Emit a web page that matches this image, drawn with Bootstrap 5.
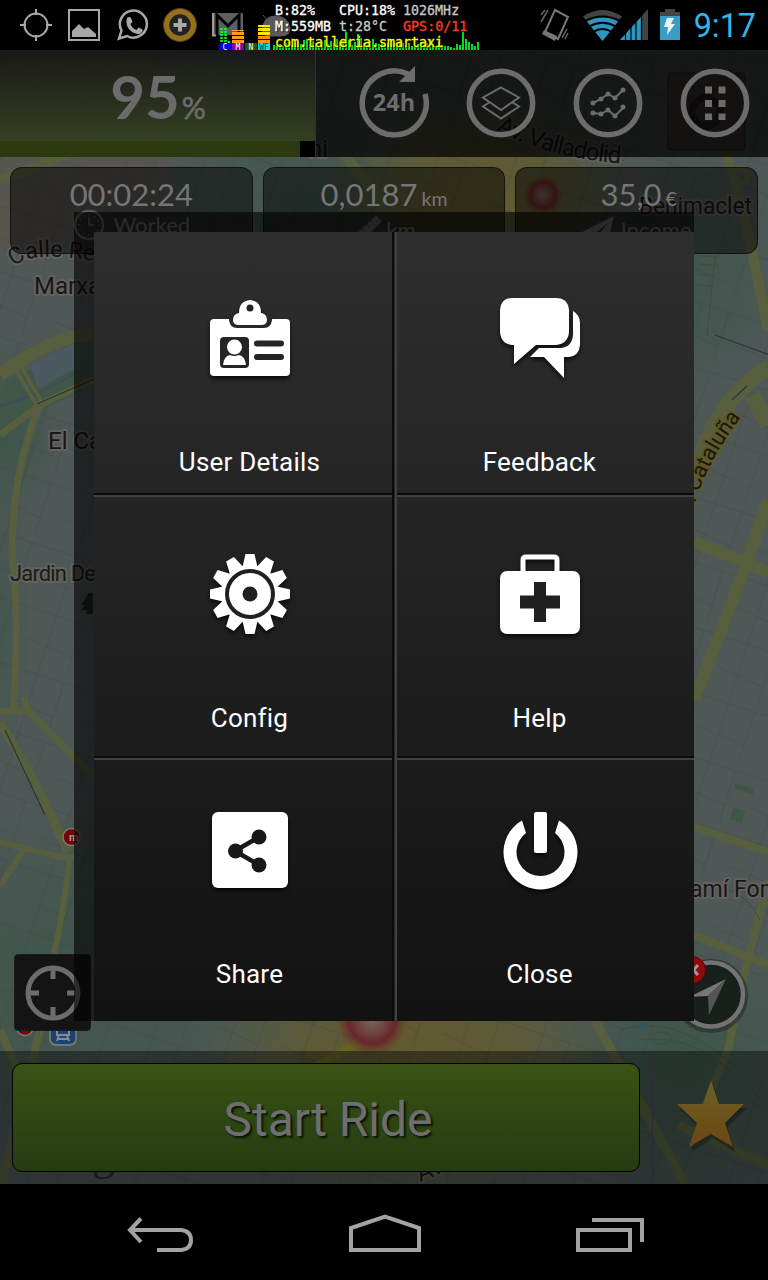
<!DOCTYPE html>
<html lang="en">
<head>
    <meta charset="UTF-8">
    <meta name="viewport" content="width=device-width, initial-scale=1.0">
    <title>Smartaxi</title>
    <link href="https://cdn.jsdelivr.net/npm/bootstrap@5.3.0/dist/css/bootstrap.min.css" rel="stylesheet">
    <style>
        body {
            background: #000;
            font-family: Roboto, sans-serif;
        }
        .phone {
            width: 768px;
            height: 1280px;
            overflow: hidden;
            background: #000;
        }
        svg {
            display: block;
            flex: none;
        }
        /* status bar */
        .status-bar {
            height: 50px;
            padding: 0 12px 0 18px;
        }
        .clock {
            font-size: 32.3px;
            line-height: 50px;
            color: #33b5e5;
            margin-left: 13px;
            padding-top: 2px;
        }
        .monitor {
            left: 219px;
            top: 0;
            width: 264px;
            height: 51px;
        }
        .monitor-text {
            left: 56px;
            top: 3px;
            font: 13.3px/16px "DejaVu Sans Mono", monospace;
            color: #fff;
            white-space: pre;
            -webkit-text-stroke: .3px;
            text-shadow: 1px 1px 1px #000;
        }
        .t-dim { color: #c8c8c8; }
        .t-red { color: #ff3b1d; }
        .t-yellow { color: #ff0; }
        /* map screen */
        .screen {
            height: 1134px;
        }
        .map {
            left: 0;
            top: 0;
        }
        .top-bar {
            height: 107px;
            background: rgba(0, 0, 0, .73);
        }
        .battery-cell {
            width: 316px;
            border-right: 1px solid #303232;
            background: linear-gradient(rgba(34, 34, 34, .2), rgba(66, 80, 38, .82));
        }
        .battery-value {
            height: 91px;
            font-family: Lato, sans-serif;
            font-weight: 700;
            font-size: 60px;
            line-height: 92px;
            color: #6b6b6b;
            padding-left: 1px;
        }
        .battery-value span {
            font-size: 30px;
            font-weight: 400;
            margin-left: 2px;
            -webkit-text-stroke: .6px;
        }
        .level {
            height: 16px;
            background: #000;
            border-radius: 0;
        }
        .level .progress-bar {
            background: #2d3a10;
        }
        .tools {
            padding-bottom: 1px;
        }
        .tool {
            width: 107px;
        }
        .stat {
            height: 87px;
            border: 1px solid rgba(0, 0, 0, .55);
            border-radius: 12px;
            background: rgba(0, 0, 0, .5);
            font-family: Lato, sans-serif;
            color: #757575;
            padding-top: 7px;
        }
        .stat-value {
            font-size: 31px;
            line-height: 38px;
        }
        .stat-value small {
            font-size: 19.5px;
            margin-left: 4px;
        }
        .stat-name {
            height: 24px;
            font-size: 22px;
            line-height: 24px;
            gap: 9px;
            color: #6a6a6a;
        }
        .locate {
            width: 77px;
            height: 77px;
            background: #141414;
            border: 1px solid #1c1c1c;
            border-radius: 4px;
        }
        .compass {
            left: 667px;
            top: 897px;
        }
        .bottom-bar {
            height: 133px;
            background: rgba(0, 0, 0, .4);
        }
        .ride-wrap {
            width: 653px;
            padding: 12px;
            border-right: 1px solid #2e2a35;
        }
        .btn-ride, .btn-ride:hover {
            height: 109px;
            border: 1px solid #000;
            border-radius: 10px;
            background: linear-gradient(#395214, #243c12);
            color: #6e6e6e;
            font-size: 48px;
            text-shadow: 2px 2px 2px #0b1405;
        }
        .soft-keys {
            height: 96px;
            padding: 2px 0 0 127px;
            gap: 155.5px;
        }
        /* popup menu */
        .popup {
            left: 74px;
            top: 212px;
            padding: 20px 0 0 20px;
            background: rgba(0, 0, 0, .6);
        }
        .menu {
            width: 600px;
            height: 789px;
            display: grid;
            grid-template: 261px 263px 265px / 303px 297px;
            background: linear-gradient(#2e2e2e, #121212);
        }
        .menu-item {
            color: #fff;
            font-size: 26px;
            line-height: 32px;
            letter-spacing: .2px;
            padding: 66px 12px 0 0;
        }
        .menu-item svg {
            filter: drop-shadow(0 3px 2px rgba(0, 0, 0, .7));
            margin-bottom: 66px;
        }
        .menu-item:nth-child(odd) {
            padding-left: 10px;
            padding-right: 0;
            border-right: 2px solid #414141;
            box-shadow: inset -1px 0 #262626, inset -3px 0 #0b0b0b;
        }
        .row-2, .row-3 {
            background: linear-gradient(#0b0b0b 2px, #404040 2px, #404040 4px, transparent 4px) no-repeat;
        }
        .menu-item.row-2 { padding-top: 61px; }
        .menu-item.row-3 { padding-top: 54px; }
    </style>
</head>
<body>
<div class="phone position-relative d-flex flex-column">

    <!-- status bar -->
    <div class="status-bar d-flex align-items-center position-relative">
        <svg width="250" height="50" viewBox="18 0 250 50" fill="none">
            <g stroke="#a8a8a8" stroke-width="2"><circle cx="36" cy="25" r="11.5"/><path d="M36 9v6M36 35v6M20 25h6M46 25h6"/><path d="M69 10h30v30H69z"/></g>
            <path d="M72 37v-6l7-7 5 5 4-2 8 7v3z" fill="#a8a8a8"/>
            <path d="M119 38.500l2.500-8a13.500 13.500 0 1 1 5.500 5.500z" stroke="#a8a8a8" stroke-width="2.500"/>
            <path d="M127 18c2-2 4-1 4.500 1l1 3-2 2c1 3 3 5 6 6l2-2.500 4 2c1 1-1 5-5 4.500-7-1-13-8-10.500-16z" fill="#a8a8a8"/>
            <circle cx="180" cy="25" r="13.500" stroke="#95701f" stroke-width="5.500" fill="#222"/>
            <circle cx="180" cy="25" r="16.500" stroke="#5b4518"/>
            <path d="M180 18.500v13M173.500 25h13" stroke="#a8a8a8" stroke-width="4"/>
            <path d="M213 13h30v22h-30z" fill="#5f5f5f"/><path d="M217 36V15l11 11 11-11v21" stroke="#000" stroke-width="3"/><path d="M216 35.500h-3V13" stroke="#9a9a9a" stroke-width="2"/>
        </svg>
        <div class="ms-auto d-flex align-items-center">
            <svg width="147" height="50" viewBox="534 0 147 50" fill="none">
                <path d="M555 10l13 7-10 22-13-7z" stroke="#777" stroke-width="2"/><path d="M544 30l13 6-2 5-13-7z" fill="#777"/>
                <path d="M541 15l4-5M541 22l7-12M562 38l5-9M565 39l3-6" stroke="#666" stroke-width="1.500"/>
                <path d="M602.500 41L583 16.500q19.500-13 39 0z" fill="#444"/>
                <path d="M602.500 41L587 21.500q15.500-8.500 31 0z" fill="#2b96bf"/>
                <g stroke="#000" stroke-width="2"><path d="M585 21q17.500-9 35 0"/><path d="M589 26.500q13.500-7.500 27 0"/><path d="M593 32q9.500-6 19 0"/></g>
                <path d="M620 40l28-31v31z" fill="#444"/><path d="M620 40l21-23v23z" fill="#2b96bf"/><path d="M625.500 20v20M631 20v20M636 16v24M641.500 10v30" stroke="#000" stroke-width="1.200"/>
                <path d="M665 9h10v3h5v5h-20v-5h5z" fill="#444"/><path d="M660 16h20v24h-20z" fill="#3a9cc4"/><path d="M667 18h7l-3 6h4l-8 11 1-8h-4z" fill="#e8f2f6"/>
            </svg>
            <div class="clock">9:17</div>
        </div>

        <!-- system monitor drawn over the status icons -->
        <div class="monitor position-absolute">
            <svg width="264" height="51" viewBox="219 0 264 51" id="monitorGraph">
                <path d="M262 34q0-18 13-18t15 12q0 8-9 8h-13zM263 15l4 5" fill="#5a5a5a" stroke="#5a5a5a"/>
                <path d="M221.500 28v15M225.500 28v15M229 41v2" stroke="#00ff2a" stroke-width="2.500" stroke-dasharray="2 1"/>
                <path d="M238 43V30" stroke="#ff9c1c" stroke-width="12" stroke-dasharray="3 1"/>
                <path d="M264 43V34" stroke="#ff8c1c" stroke-width="12" stroke-dasharray="3 1"/><path d="M264 35V25" stroke="#ffe600" stroke-width="12" stroke-dasharray="3 1"/>
                <path d="M219 43h12v8h-12z" fill="#0000f0"/><path d="M232 43h12v8h-12z" fill="#8a00a8"/><path d="M245 43h12v8h-12z" fill="#1e5a0a"/><path d="M258 43h12v8h-12z" fill="#00e5f0"/>
                <g font-family="DejaVu Sans Mono, monospace" font-size="8" fill="#fff" text-anchor="middle"><text x="225" y="50">C</text><text x="238" y="50">M</text><text x="251" y="50">N</text><text x="264" y="50" fill="#033">WF</text></g>
                <g id="bars" fill="#00dc28"></g>
            </svg>
            <div class="monitor-text position-absolute"><div>B:82%   CPU:18% <span class="t-dim">1026MHz</span></div><div>M:559MB <span class="t-dim">t:28°C</span>  <span class="t-red">GPS:0/11</span></div><div class="t-yellow">com.talleria.smartaxi</div></div>
        </div>
    </div>

    <div class="screen position-relative d-flex flex-column">
        <!-- map canvas -->
        <svg class="map position-absolute" width="768" height="1134" viewBox="0 50 768 1134" fill="none">
            <defs>
                <radialGradient id="green"><stop offset="0" stop-color="#3d5549"/><stop offset=".5" stop-color="#41564d" stop-opacity=".75"/><stop offset="1" stop-color="#455650" stop-opacity="0"/></radialGradient>
                <radialGradient id="gold"><stop offset="0" stop-color="#635a2e"/><stop offset=".5" stop-color="#5f5a32" stop-opacity=".85"/><stop offset="1" stop-color="#5c5f36" stop-opacity="0"/></radialGradient>
                <radialGradient id="hot"><stop offset="0" stop-color="#77645c"/><stop offset=".35" stop-color="#6f4740"/><stop offset=".65" stop-color="#67262a"/><stop offset="1" stop-color="#6b4028" stop-opacity="0"/></radialGradient>
                <pattern id="streets" width="74" height="62" patternUnits="userSpaceOnUse" patternTransform="rotate(18)"><path d="M0 10h74M22 0v62M0 40l50 6M50 10v52" stroke="#404845" stroke-width=".8" opacity=".6"/></pattern>
            </defs>
            <path d="M0 50h768v1134H0z" fill="#4f5857"/>
            <path d="M0 50h170v170L0 250z" fill="#575550"/>
            <ellipse cx="0" cy="430" rx="65" ry="100" fill="url(#green)"/>
            <ellipse cx="0" cy="620" rx="34" ry="160" fill="url(#green)" opacity=".6"/>
            <ellipse cx="50" cy="980" rx="280" ry="180" fill="url(#green)" opacity=".9"/>
            <ellipse cx="700" cy="270" rx="90" ry="130" fill="url(#green)" opacity=".8"/>
            <ellipse cx="680" cy="1060" rx="150" ry="140" fill="url(#green)"/>
            <ellipse cx="300" cy="200" rx="150" ry="100" fill="url(#green)" opacity=".8"/>
            <ellipse cx="480" cy="200" rx="160" ry="110" fill="url(#gold)"/>
            <ellipse cx="410" cy="1060" rx="210" ry="150" fill="url(#gold)"/>
            <path d="M0 50h768v1134H0z" fill="url(#streets)"/>
            <!-- park and river -->
            <path d="M0 390L75 340 94 335V385L30 415 0 440z" fill="#3f5648"/>
            <path d="M30 365l44-22v26l-36 20z" fill="#4a5a60"/>
            <path d="M0 406q50-14 94-45" stroke="#3c4c5c" stroke-width="2"/>
            <!-- avenues -->
            <g stroke="#575f3f" stroke-width="9">
                <path d="M0 375q50-38 94-42" stroke-width="13"/>
                <path d="M0 435l40-30q28-14 54-25" stroke-width="7"/>
                <path d="M16 370l22 38M22 368l22 38" stroke-width="4"/>
                <path d="M40 405Q12 470 12 555q8 60 1 160" stroke-width="7"/>
                <path d="M0 711h28l-4-14M28 711l66 66" stroke-width="7"/>
                <path d="M0 722l38 66 30 64"/><path d="M0 842l60 15h14M25 848l-25 38M70 855q-6 55-16 99" stroke-width="6"/>
                <path d="M0 1030l40 90M42 1020l-40 164" stroke-width="8"/>
                <path d="M725 150q20 60 43 180" stroke-width="10"/><circle cx="740" cy="176" r="8" stroke-width="6"/>
                <path d="M768 368q-52 30-74 110M752 395l16 30" stroke-width="16"/>
                <path d="M694 542l50 20 24 10M768 500l-20 60-54 140" stroke-width="12"/>
                <path d="M694 827l74 25M694 935l74 30M768 880l-30 120-10 50-30 70" stroke-width="8"/>
                <path d="M595 1021l50 90 40 73M768 1165l-90-40" stroke-width="9"/>
                <path d="M240 1110l140-80" stroke="#666422"/><path d="M340 150l50 60M0 180l130-50M250 100l70 50" stroke-width="10"/>
            </g>
            <path d="M5 730l40 85M37 404l57-25M715 335l55 20M732 400l15-14" stroke="#2e3433" stroke-width="1.200"/>
            <path d="M735 783l18 6v6l-18-6zM733 808l12 3-3 12-12-4z" fill="#3f5645"/>
            <g stroke="#3e4a45" stroke-width=".9"><path d="M700 256l18 1M699 264l19 2M698 274l18 2M697 285l18 2M715 256l-8 80M700 890q40-10 60 30M620 1030q60-20 130 50M640 1040q60-10 120 60"/><ellipse cx="662" cy="1038" rx="10" ry="6"/></g>
            <path d="M638 1022h8v8h-8z" fill="#34555c"/>
            <!-- demand spots -->
            <circle cx="543" cy="195" r="20" fill="url(#hot)"/>
            <circle cx="372" cy="1020" r="36" fill="url(#hot)"/>
            <!-- labels -->
            <defs><path id="vall" d="M496 130Q550 160 640 165"/><path id="reus" d="M14 267Q30 248 110 264"/><path id="cata" d="M687 541Q693 480 741 417"/></defs>
            <g font-family="Roboto, sans-serif" font-size="24" fill="#191714" stroke="#62615f" stroke-width="4" paint-order="stroke" stroke-linejoin="round">
                <text textLength="130"><textPath href="#vall" textLength="130">Av. Valladolid</textPath></text>
                <text font-size="23"><textPath href="#reus">Calle Reus</textPath></text>
                <text font-size="22" stroke="#5e5924" text-anchor="end"><textPath href="#cata" startOffset="100%">Av. Cataluña</textPath></text>
                <text x="34" y="294">Marxalenes</text>
                <text x="48" y="449">El Calvari</text>
                <text x="10" y="581" font-size="22" fill="#132013" textLength="86">Jardin De</text>
                <text x="639" y="214" textLength="113" lengthAdjust="spacingAndGlyphs">Benimaclet</text>
                <text x="690" y="897" font-size="23">amí Fomento</text>
                <text x="309" y="157">ni</text>
                <text x="420" y="1182" transform="rotate(-22 420 1182)">Av</text>
            </g>
            <text x="92" y="1169" font-family="Liberation Serif, serif" font-size="46" fill="#2a2f2e">g</text>
            <path d="M89 593l-8 12h4l-4 5h6v4h6v-21z" fill="#20261f"/>
            <circle cx="71.500" cy="837" r="8.500" fill="#700" stroke="#777" stroke-width="1.500"/><text x="69" y="841" font-family="Roboto, sans-serif" font-weight="700" font-size="11" fill="#999">m</text>
            <circle cx="25" cy="1027" r="8.500" fill="#700" stroke="#777" stroke-width="1.500"/>
            <rect x="50" y="1018" width="26" height="27" rx="6" fill="#1c4370" stroke="#71777a" stroke-width="1.800"/><path d="M57 1024h12v11H57zM59 1035l-2 6M67 1035l2 6M58 1039h10" stroke="#858b90" stroke-width="2"/>
            <rect x="668" y="73" width="77" height="77" rx="3" fill="#4b4541" stroke="#292726"/><circle cx="706" cy="112" r="14" stroke="#2a2424" stroke-width="7"/>
        </svg>

        <div class="top-bar d-flex position-relative">
            <div class="battery-cell d-flex flex-column">
                <div class="battery-value text-center">95<span>%</span></div>
                <div class="progress level"><div class="progress-bar" style="width: 95.200%"></div></div>
            </div>
            <div class="tools ms-auto d-flex align-items-center">
                <div class="tool"><svg class="mx-auto" width="76" height="80" viewBox="-38 -40 76 80" fill="none">
                    <path d="M31 -9A32 32 0 1 1 14 -29" stroke="#6c6c6c" stroke-width="5.500"/><path d="M21 -37v16H5z" fill="#6c6c6c"/>
                    <text y="8" text-anchor="middle" font-family="Open Sans, sans-serif" font-weight="700" font-size="23.500" fill="#6c6c6c">24h</text></svg></div>
                <div class="tool"><svg class="mx-auto" width="76" height="80" viewBox="-38 -40 76 80" fill="none" stroke="#6c6c6c">
                    <circle r="31.700" stroke-width="5.500"/><path d="M0-15.500L18-5.500 0 7-18-5.500zM-11 -1l-7 4.500L0 15.500 18 3.500 11-1" stroke-width="2"/></svg></div>
                <div class="tool"><svg class="mx-auto" width="76" height="80" viewBox="-38 -40 76 80" fill="none" stroke="#6c6c6c">
                    <circle r="31.700" stroke-width="5.500"/><path d="M-15 0l8-4 7-5 7 4 8-8M-15 10l8 1 7-4 7 6 8-8" stroke-width="2"/><path d="M-15 0h0M-7-4h0M0-9h0M7-5h0M15-13h0M-15 10h0M-7 11h0M0 7h0M7 13h0M15 4h0" stroke-width="5" stroke-linecap="round"/></svg></div>
                <div class="tool"><svg class="mx-auto" width="76" height="80" viewBox="-38 -40 76 80" fill="none" stroke="#6c6c6c">
                    <circle r="31.700" stroke-width="5.500"/><path d="M-6.500-16.500V17M7-16.500V17" stroke-width="7" stroke-dasharray="7 6.500"/></svg></div>
            </div>
        </div>

        <div class="d-flex position-relative" style="gap: 10px; padding: 10px">
            <div class="stat flex-fill w-100 text-center">
                <div class="stat-value">00:02:24</div>
                <div class="stat-name d-flex justify-content-center align-items-center"><svg width="32" height="32" viewBox="-16 -16 32 32" fill="none" stroke="#5d5d5d"><circle r="14" stroke-width="2.500"/><circle r="10" stroke-width="2" stroke-dasharray="1 4.200"/><path d="M0-8V0H5" stroke-width="1.500"/></svg>Worked</div>
            </div>
            <div class="stat flex-fill w-100 text-center">
                <div class="stat-value">0,0187<small>km</small></div>
                <div class="stat-name d-flex justify-content-center align-items-center" style="gap: 2px"><svg width="32" height="32" viewBox="0 0 32 32"><path d="M0 24L24 1l6 6L6 31z" fill="#555757"/><path d="M6 18l3 3M10 14l3 3M14 10l3 3M18 6l3 3" stroke="#222"/></svg>km</div>
            </div>
            <div class="stat flex-fill w-100 text-center">
                <div class="stat-value ps-1">35,0<small>€</small></div>
                <div class="stat-name d-flex justify-content-center align-items-center" style="gap: 7px"><svg width="32" height="32" viewBox="0 0 32 32"><path d="M0 18L32 2 25 30 16 21 27 8 10 22z" fill="#666"/></svg>Income</div>
            </div>
        </div>

        <div class="flex-grow-1 d-flex align-items-end position-relative" style="padding: 0 0 20px 14px">
            <div class="locate d-flex align-items-center justify-content-center">
                <svg width="56" height="56" viewBox="-28 -28 56 56" fill="none" stroke="#6c6c6c" stroke-width="5"><circle r="25"/><path d="M0-25v11M0 14v11M-25 0h11M14 0h11"/></svg>
            </div>
        </div>
        <svg class="compass position-absolute" width="90" height="90" viewBox="668 947 90 90" fill="none">
            <circle cx="712" cy="996" r="34" stroke="#1b211e" stroke-width="6" opacity=".5"/><circle cx="712" cy="994.500" r="32" fill="#18201b" stroke="#737373" stroke-width="4.500"/>
            <path d="M727 979l-37 18 19-1z" fill="#777"/><path d="M727 979l-17 36-1-19z" fill="#555"/>
            <circle cx="693" cy="970" r="13.500" fill="#900a0a" stroke="#560808"/><path d="M690 965l9 10M699 965l-9 10" stroke="#999" stroke-width="3"/>
        </svg>

        <div class="bottom-bar d-flex position-relative">
            <div class="ride-wrap"><button type="button" class="btn btn-ride w-100 pe-0 pb-0 pt-1 ps-1">Start Ride</button></div>
            <div class="flex-fill d-flex align-items-center justify-content-center">
                <svg width="80" height="84" viewBox="-40 -41 80 84">
                    <defs><linearGradient id="star" x2="0" y2="1"><stop stop-color="#6b6326"/><stop offset="1" stop-color="#6c4511"/></linearGradient></defs>
                    <path transform="translate(2 4)" d="M0-36L8-13H34L14 6 22 31 0 17-22 31-14 6-34-13H-8z" fill="#181d18" opacity=".6"/>
                    <path d="M0-36L8-13H33L14 6 22 30 0 17-22 30-14 6-34-13H-8z" fill="url(#star)"/>
                </svg>
            </div>
        </div>
    </div>

    <div class="soft-keys d-flex align-items-center">
        <svg width="66" height="38" viewBox="127 1214 66 38" fill="none" stroke="#a3a3a3" stroke-width="4"><path d="M129 1230h52q10 1 10 10t-10 10h-24M141 1218.500l-11 11.500 11 12"/></svg>
        <svg width="72" height="38" viewBox="348 1214 72 38" fill="none" stroke="#a3a3a3" stroke-width="4"><path d="M350 1250v-22l34-11.500 34 11.500v22z"/></svg>
        <svg width="68" height="38" viewBox="576 1214 68 38" fill="none" stroke="#a3a3a3" stroke-width="4"><path d="M578 1230h52v20h-52zM592 1220h50v22"/></svg>
    </div>

    <!-- popup menu -->
    <div class="popup position-absolute">
        <div class="menu">
            <div class="menu-item row-1 d-flex flex-column align-items-center">
                <svg width="82" height="82" viewBox="-1 -1 82 82"><rect y="20" width="80" height="57" rx="4" fill="#fff"/>
                    <path d="M19 16h43v5q-1 8-8 8H27q-7 0-8-8z" fill="#282828"/>
                    <path d="M29 14q0-12 11-13 11 1 11 13 6 1 6 7 0 5-6 5H29q-6 0-6-5 0-6 6-7z" fill="#fff"/><circle cx="40" cy="9" r="3.500" fill="#222"/>
                    <rect x="10" y="38" width="29" height="31" rx="4" fill="#252525"/><circle cx="24.500" cy="48" r="7.500" fill="#fff"/><path d="M13 66q1-9 7-10 4 2 9 0 6 1 7 10z" fill="#fff"/>
                    <path d="M47 44.500h24M47 58h24" stroke="#252525" stroke-width="6" stroke-linecap="round"/></svg>
                <div>User Details</div>
            </div>
            <div class="menu-item row-1 d-flex flex-column align-items-center">
                <svg width="82" height="82" viewBox="-1 0 82 82" fill="#fff"><path d="M12 0h44q12 0 13 12v22q-1 12-13 13H36L14 66V47h-2Q1 46 0 34V12Q1 0 12 0z"/><path d="M73 13q7 4 7 12v22q-1 11-11 12h-5v21L44 59H30l9-9h22q11-1 12-13z"/></svg>
                <div>Feedback</div>
            </div>
            <div class="menu-item row-2 d-flex flex-column align-items-center">
                <svg width="82" height="82" viewBox="-41 -40 82 82"><g fill="#fff"><g id="t"><path id="tooth" d="M-4.500-40h9L8-25H-8zM-4.500 40h9L8 25H-8z"/><use href="#tooth" transform="rotate(90)"/></g><use href="#t" transform="rotate(30)"/><use href="#t" transform="rotate(60)"/><circle r="29"/></g><circle r="23" fill="none" stroke="#202020" stroke-width="4"/><circle r="7.500" fill="#202020"/></svg>
                <div>Config</div>
            </div>
            <div class="menu-item row-2 d-flex flex-column align-items-center">
                <svg width="82" height="82" viewBox="-1 0 82 82"><path d="M23 18V6q0-3 3-3h28q3 0 3 3v12" fill="none" stroke="#fff" stroke-width="5"/><rect y="17" width="80" height="63" rx="7" fill="#fff"/><path d="M34 28h12v13.500h14v13H46V68H34V54.500H20v-13h14z" fill="#202020"/></svg>
                <div>Help</div>
            </div>
            <div class="menu-item row-3 d-flex flex-column align-items-center">
                <svg width="82" height="82" viewBox="-1 -1 82 82"><rect x="2" y="1" width="76" height="76" rx="6" fill="#fff"/><path d="M49 26L25 40l24 14" fill="none" stroke="#181818" stroke-width="4.500"/><g fill="#181818"><circle cx="49" cy="26" r="7.500"/><circle cx="25.500" cy="40" r="7.500"/><circle cx="49" cy="54" r="7.500"/></g></svg>
                <div>Share</div>
            </div>
            <div class="menu-item row-3 d-flex flex-column align-items-center">
                <svg width="82" height="82" viewBox="-1 -1 82 82" fill="#fff"><path d="M22 9.500A37 37 0 1 0 59 9.500L55 22A24 24 0 1 1 26 22z"/><rect x="34" y="1" width="13" height="41" rx="2"/></svg>
                <div>Close</div>
            </div>
        </div>
    </div>
</div>

<script src="https://cdn.jsdelivr.net/npm/bootstrap@5.3.0/dist/js/bootstrap.bundle.min.js"></script>
<script>
    // network history, one bar every 3px
    const levels = [6, 5, 7, 5, 8, 9, 6, 8, 10, 7, 11, 12, 6, 10, 8, 5, 9, 11, 7, 10, 8, 12, 9, 10, 20, 11, 6, 9, 17, 13, 8, 6, 10, 12, 8, 7, 9, 6, 8, 12, 9, 7, 10, 8, 5, 8, 5, 4, 7, 9, 6, 8, 12, 7, 5, 9, 6, 5, 5, 4, 3, 7, 6, 21, 12, 9, 7, 5, 9];
    const bars = document.getElementById('bars');
    levels.forEach((h, i) => {
        const r = document.createElementNS('http://www.w3.org/2000/svg', 'rect');
        r.setAttribute('x', 273 + i * 3);
        r.setAttribute('y', 51 - h);
        r.setAttribute('width', 2);
        r.setAttribute('height', h);
        bars.appendChild(r);
    });
</script>
</body>
</html>
